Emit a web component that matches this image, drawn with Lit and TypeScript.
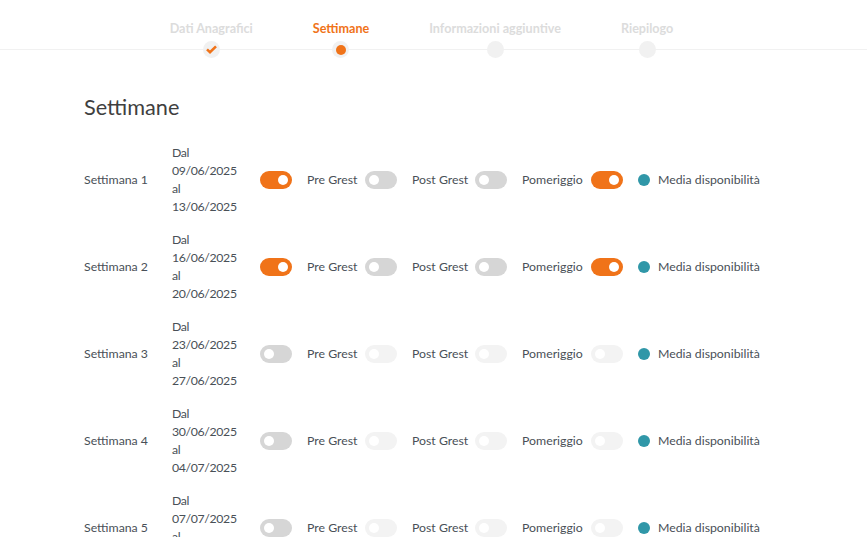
import { LitElement, html, css } from "lit";
import { customElement } from "lit/decorators.js";

const STEPS = [
  { label: "Dati Anagrafici", state: "done" },
  { label: "Settimane", state: "active" },
  { label: "Informazioni aggiuntive", state: "todo" },
  { label: "Riepilogo", state: "todo" },
];

const WEEKS = [
  { name: "Settimana 1", from: "09/06/2025", to: "13/06/2025", main: true, pre: false, post: false, pom: true, enabled: true },
  { name: "Settimana 2", from: "16/06/2025", to: "20/06/2025", main: true, pre: false, post: false, pom: true, enabled: true },
  { name: "Settimana 3", from: "23/06/2025", to: "27/06/2025", main: false, pre: false, post: false, pom: false, enabled: false },
  { name: "Settimana 4", from: "30/06/2025", to: "04/07/2025", main: false, pre: false, post: false, pom: false, enabled: false },
  { name: "Settimana 5", from: "07/07/2025", to: "11/07/2025", main: false, pre: false, post: false, pom: false, enabled: false },
];

@customElement("app-root")
export class AppRoot extends LitElement {
  static styles = css`
    :host {
      display: block;
      height: 537px;
      overflow: hidden;
      background: #fff;
      font-family: "Lato", "Noto Sans", sans-serif;
      color: #495057;
    }
    .stepper {
      height: 49px;
      border-bottom: 1px solid #f1f1f1;
      display: flex;
      justify-content: center;
      gap: 60px;
      padding-right: 24px;
    }
    .step {
      position: relative;
      padding-top: 21px;
      height: 28px;
      font-size: 12.6px;
      line-height: 16px;
      font-weight: 700;
      color: #dcdcdc;
      white-space: nowrap;
    }
    .step.active { color: #f07319; }
    .marker {
      position: absolute;
      left: 50%;
      top: 41px;
      width: 17px;
      height: 17px;
      margin-left: -8.5px;
      border-radius: 50%;
      background: #f1f1f1;
      display: flex;
      align-items: center;
      justify-content: center;
    }
    .core { width: 10px; height: 10px; border-radius: 50%; background: #f07319; }
    main { padding: 0 84px; }
    h1 {
      margin: 0;
      padding-top: 43px;
      height: 51px;
      font-size: 21.7px;
      line-height: 28px;
      font-weight: 400;
      color: #3f3f3f;
    }
    .rows { display: flex; flex-direction: column; gap: 15px; }
    .row {
      display: grid;
      grid-template-columns: 88px 88px 47px 58px 47px 63px 47px 69px 47px 1fr;
      align-items: center;
      font-size: 12.3px;
      line-height: 18px;
      color: #495057;
    }
    .dates { width: 66px; letter-spacing: -0.35px; }
    .track {
      width: 32px;
      height: 18px;
      border-radius: 9px;
      background: #d6d6d6;
      position: relative;
    }
    .track::after {
      content: "";
      position: absolute;
      top: 4px;
      left: 4px;
      width: 10px;
      height: 10px;
      border-radius: 50%;
      background: #fff;
    }
    .track.on { background: #f07319; }
    .track.on::after { left: 18px; }
    .track.off { background: #f3f3f3; }
    .media { display: flex; align-items: center; gap: 8px; white-space: nowrap; }
    .dot { width: 12px; height: 12px; border-radius: 50%; background: #3097a8; }
  `;

  private toggle(on: boolean, enabled = true) {
    return html`<div class="track ${on ? "on" : ""} ${enabled ? "" : "off"}"></div>`;
  }

  render() {
    return html`
      <div class="stepper">
        ${STEPS.map(
          (s) => html`<div class="step ${s.state === "active" ? "active" : ""}">
            ${s.label}
            <span class="marker">
              ${s.state === "done"
                ? html`<svg width="11" height="9" viewBox="0 0 11 9"><path d="M1 4.4 L4 7.2 L10 1.4" fill="none" stroke="#f07319" stroke-width="2.6"/></svg>`
                : s.state === "active"
                ? html`<span class="core"></span>`
                : ""}
            </span>
          </div>`
        )}
      </div>
      <main>
        <h1>Settimane</h1>
        <div class="rows">
          ${WEEKS.map(
            (w) => html`<div class="row">
              <div>${w.name}</div>
              <div class="dates">Dal ${w.from} al ${w.to}</div>
              ${this.toggle(w.main)}
              <div>Pre Grest</div>
              ${this.toggle(w.pre, w.enabled)}
              <div>Post Grest</div>
              ${this.toggle(w.post, w.enabled)}
              <div>Pomeriggio</div>
              ${this.toggle(w.pom, w.enabled)}
              <div class="media"><span class="dot"></span>Media disponibilità</div>
            </div>`
          )}
        </div>
      </main>
    `;
  }
}
